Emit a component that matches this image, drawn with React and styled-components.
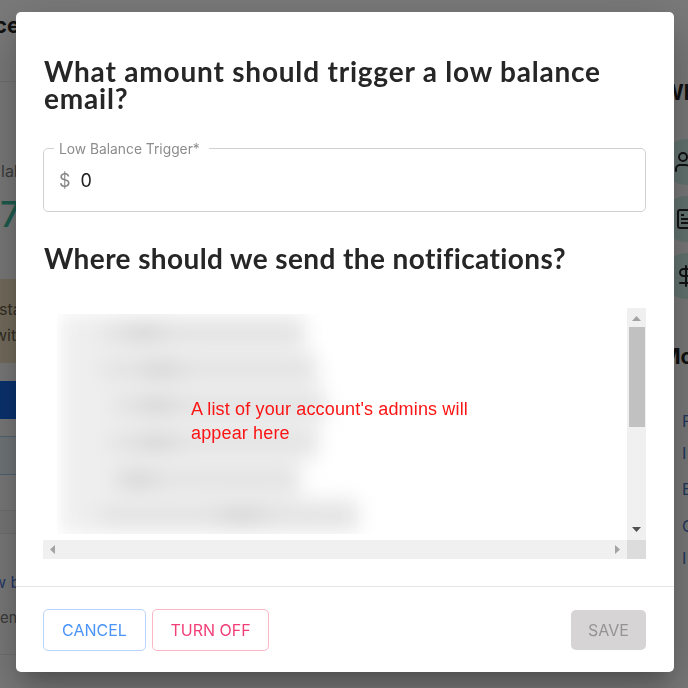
import React from "react";
import styled, { createGlobalStyle } from "styled-components";
import { DollarSign, Users } from "lucide-react";

const GlobalStyle = createGlobalStyle`
  * {
    box-sizing: border-box;
  }
  body {
    margin: 0;
    overflow: hidden;
    font-family: Inter, "Liberation Sans", sans-serif;
  }
`;

const Page = styled.div`
  display: flex;
  justify-content: space-between;
  width: 688px;
  height: 688px;
  overflow: hidden;
  background-color: #f4f4f4;
`;

const Strip = styled.div`
  display: flex;
  flex-direction: column;
  width: ${props => props.width};
  height: 688px;
  overflow: hidden;
  white-space: nowrap;
`;

const Row = styled.div`
  flex: none;
  height: ${props => props.height}px;
  line-height: ${props => props.height}px;
  padding-left: ${props => props.left || 0}px;
  text-indent: ${props => props.indent || 0}px;
  background-color: ${props => props.fill || "transparent"};
  border-top: ${props => (props.top ? `1px solid ${props.top}` : "none")};
  border-bottom: ${props => (props.bottom ? `1px solid ${props.bottom}` : "none")};
  color: ${props => props.color || "#222"};
  font-size: ${props => props.size || 16}px;
  font-weight: ${props => props.weight || 400};
`;

const Badge = styled.div`
  display: flex;
  flex: none;
  align-items: center;
  justify-content: center;
  width: 46px;
  height: 46px;
  margin: 0 0 11px -11px;
  border-radius: 50%;
  background-color: #c8e8e0;
  color: #222;
`;

const Backdrop = styled.div`
  position: fixed;
  inset: 0;
  padding: 12px 14px 16px 16px;
  background-color: rgba(0, 0, 0, 0.5);
`;

const Dialog = styled.div`
  display: flex;
  flex-direction: column;
  height: 660px;
  border-radius: 5px;
  background-color: #fff;
  box-shadow: 0 13px 17px -8px rgba(0, 0, 0, 0.2),
    0 27px 43px 3px rgba(0, 0, 0, 0.14), 0 10px 52px 9px rgba(0, 0, 0, 0.12);
`;

const Content = styled.div`
  height: 574px;
  padding: 46px 28px 0 27px;
`;

const Title = styled.h2`
  margin: 0;
  padding-left: 1px;
  color: #262626;
  font-family: Lato, sans-serif;
  font-size: 28px;
  font-weight: 700;
  line-height: 27px;
  letter-spacing: ${props => props.spacing};
  white-space: nowrap;
`;

const Field = styled.fieldset`
  height: 72px;
  margin: 28px 0 33px;
  padding: 0 15px;
  border: 1px solid #d2d2d2;
  border-radius: 5px;
`;

const Legend = styled.legend`
  width: 155px;
  height: 16px;
  margin-left: -5px;
  padding: 1px 5px 0;
  color: #8c8c8c;
  font-size: 13.8px;
  line-height: 16px;
  white-space: nowrap;
`;

const Amount = styled.div`
  display: flex;
  gap: 10px;
  height: 49px;
  align-items: center;
  color: #222;
  font-size: 18px;
`;

const Currency = styled.span`
  color: #858585;
`;

const ListBox = styled.div`
  display: grid;
  grid-template-columns: 584px 19px;
  grid-template-rows: 232px 19px;
  margin-top: 36px;
`;

const ListView = styled.div`
  position: relative;
  padding: 6px 0 6px 14px;
`;

const BlurClip = styled.div`
  height: 220px;
  overflow: hidden;
`;

const BlurList = styled.div`
  width: 330px;
  height: 220px;
  filter: blur(10px);
`;

const AdminRow = styled.div`
  display: flex;
  align-items: center;
  height: 36.7px;
  padding-left: 5px;
`;

const Check = styled.div`
  width: 30px;
  height: 36.7px;
  background-color: #eeeeee;
`;

const Haze = styled.div`
  display: flex;
  align-items: center;
  width: ${props => props.width}px;
  height: 36.7px;
  padding-left: ${props => props.start}px;
  background-color: #eeeeee;
`;

const Address = styled.div`
  width: 100%;
  height: 13px;
  background: linear-gradient(
    90deg,
    #dedede ${props => props.dark - 12}%,
    #c9c9c9 ${props => props.dark}%,
    #dedede ${props => props.dark + 16}%
  );
`;

const Note = styled.div`
  position: absolute;
  left: 148px;
  top: 89px;
  width: 300px;
  color: #fb1414;
  font-family: "Liberation Sans", Arial, sans-serif;
  font-size: 18px;
  line-height: 24px;
  letter-spacing: 0.15px;
`;

const VerticalBar = styled.div`
  display: flex;
  flex-direction: column;
  align-items: center;
  justify-content: space-between;
  background-color: #f0f0f0;
`;

const HorizontalBar = styled.div`
  display: flex;
  justify-content: space-between;
  background-color: #f0f0f0;
`;

const Arrow = styled.svg`
  display: block;
  width: 19px;
  height: 19px;
  fill: ${props => props.tone || "#a3a3a3"};
`;

const Thumb = styled.div`
  width: 16px;
  height: 100px;
  margin-bottom: auto;
  background-color: #c1c1c1;
`;

const Corner = styled.div`
  background-color: #dcdcdc;
`;

const Actions = styled.div`
  display: flex;
  align-items: center;
  height: 86px;
  padding: 0 28px 0 27px;
  border-top: 1px solid #e4e4e4;
`;

const Button = styled.button`
  width: ${props => props.width}px;
  height: ${props => (props.fill ? 40 : 42)}px;
  margin: 0 6px 0 0;
  padding: 0;
  border: ${props => (props.fill ? "none" : `1px solid ${props.line}`)};
  border-radius: 5px;
  background-color: ${props => props.fill || "transparent"};
  color: ${props => props.tone};
  font-family: Inter, sans-serif;
  font-size: 16px;
  &:last-child {
    margin: 0 0 0 auto;
  }
`;

const admins = [
  { start: 10, width: 213, dark: 20 },
  { start: 10, width: 225, dark: 26 },
  { start: 20, width: 234, dark: 20 },
  { start: 16, width: 226, dark: 22 },
  { start: 22, width: 208, dark: 12 },
  { start: 8, width: 266, dark: 54 }
];

const NoteIcon = () => (
  <svg width="24" height="24" viewBox="0 0 24 24" fill="none" stroke="currentColor" strokeWidth="2">
    <path d="M15 3H6a2 2 0 0 0-2 2v14a2 2 0 0 0 2 2h12a2 2 0 0 0 2-2V8z" />
    <path d="M7 8h3M7 12h9M7 16h9" />
  </svg>
);

const Account = () => (
  <Strip width="16px">
    <Row height={50} size={22} weight={700} indent={-6}>ce</Row>
    <Row height={32} bottom="#e0e0e0" />
    <Row height={71} />
    <Row height={36} left={1} color="#777">lab</Row>
    <Row height={50} size={36} weight={500} color="#3bb89c">7</Row>
    <Row height={40} />
    <Row height={17} fill="#e8dabb" />
    <Row height={26} fill="#e8dabb" color="#665c48" indent={-1}>sta</Row>
    <Row height={26} fill="#e8dabb" color="#665c48" indent={-6}>wit</Row>
    <Row height={15} fill="#e8dabb" />
    <Row height={18} />
    <Row height={38} fill="#1565e0" />
    <Row height={17} />
    <Row height={39} fill="#e3edf3" top="#9cc8ea" bottom="#9cc8ea" />
    <Row height={35} />
    <Row height={24} fill="#eeeeee" top="#e0e0e0" bottom="#e0e0e0" />
    <Row height={35} />
    <Row height={26} color="#4c70d0" indent={-7}>w b</Row>
    <Row height={10} />
    <Row height={26} color="#777" size={15}>em</Row>
    <Row height={24} bottom="#e0e0e0" />
  </Strip>
);

const Shortcuts = () => (
  <Strip width="14px">
    <Row height={78} />
    <Row height={30} size={21} weight={700} indent={-12}>Wh</Row>
    <Row height={31} />
    <Badge><Users size={24} /></Badge>
    <Badge><NoteIcon /></Badge>
    <Badge><DollarSign size={24} /></Badge>
    <Row height={22} />
    <Row height={50} size={21} weight={700} indent={-13}>Mo</Row>
    <Row height={23} />
    {[["F", 32], ["I", 32], ["E", 40], ["C", 34], ["I", 30]].map(([text, height], i) => (
      <Row key={i} height={height} left={8} color="#4772b8">{text}</Row>
    ))}
  </Strip>
);

const AdminList = () => (
  <ListBox>
    <ListView>
      <BlurClip>
        <BlurList>
          {admins.map((admin, i) => (
            <AdminRow key={i}>
              <Check />
              <Haze width={admin.width} start={admin.start}>
                <Address dark={admin.dark} />
              </Haze>
            </AdminRow>
          ))}
        </BlurList>
      </BlurClip>
      <Note>
        A list of your account's admins will
        <br />
        appear here
      </Note>
    </ListView>
    <VerticalBar>
      <Arrow viewBox="0 0 19 19"><path d="M5 13h9L9.5 8z" /></Arrow>
      <Thumb />
      <Arrow viewBox="0 0 19 19" tone="#505050"><path d="M5 6h9l-4.500 5z" /></Arrow>
    </VerticalBar>
    <HorizontalBar>
      <Arrow viewBox="0 0 19 19"><path d="M12 5v9L7 9.500z" /></Arrow>
      <Arrow viewBox="0 0 19 19"><path d="M7 5v9l5-4.500z" /></Arrow>
    </HorizontalBar>
    <Corner />
  </ListBox>
);

export default () => (
  <>
    <GlobalStyle />
    <Page>
      <Account />
      <Shortcuts />
    </Page>
    <Backdrop>
      <Dialog>
        <Content>
          <Title spacing="0.8px">
            What amount should trigger a low balance
            <br />
            email?
          </Title>
          <Field>
            <Legend>Low Balance Trigger*</Legend>
            <Amount>
              <Currency>$</Currency>
              <span>0</span>
            </Amount>
          </Field>
          <Title spacing="0.4px">Where should we send the notifications?</Title>
          <AdminList />
        </Content>
        <Actions>
          <Button width={103} line="#b9d5fb" tone="#4b94f7">CANCEL</Button>
          <Button width={117} line="#fbb6c8" tone="#f23f78">TURN OFF</Button>
          <Button width={75} fill="#d6d4d4" tone="#959393">SAVE</Button>
        </Actions>
      </Dialog>
    </Backdrop>
  </>
);
